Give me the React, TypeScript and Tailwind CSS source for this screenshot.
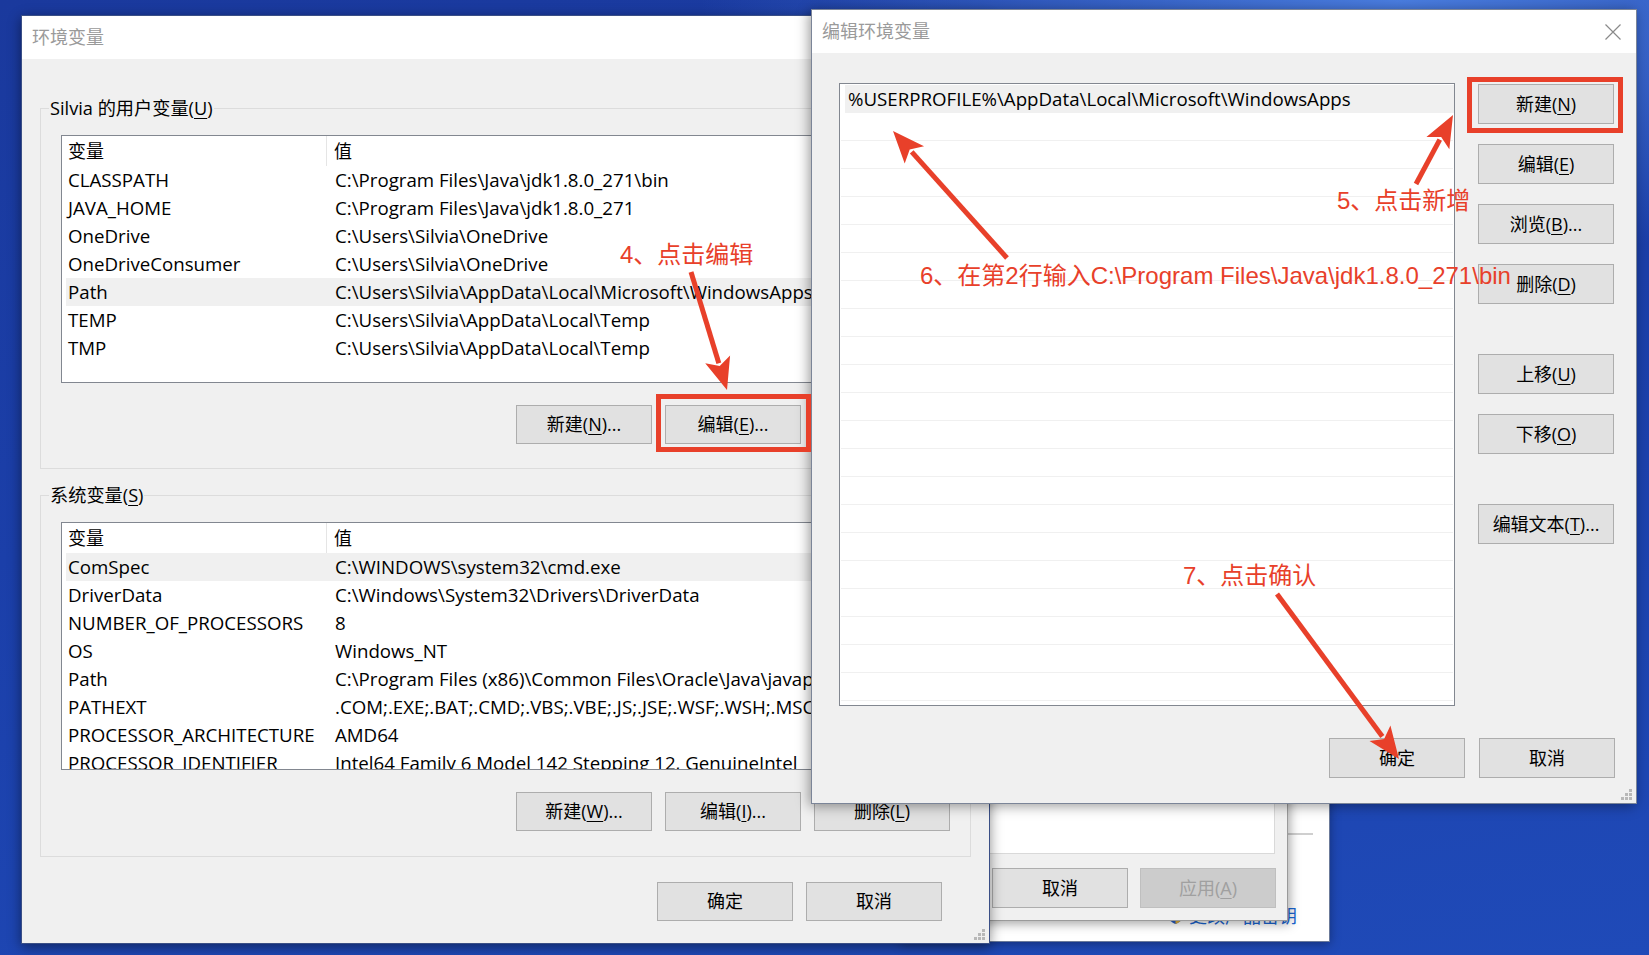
import React from "react";

const UI = "font-['Open_Sans','Noto_Sans_CJK_SC',sans-serif]";
const NOTE = "font-['Liberation_Sans','Noto_Sans_CJK_SC',sans-serif]";

const userVars: [string, string][] = [
  ["CLASSPATH", "C:\\Program Files\\Java\\jdk1.8.0_271\\bin"],
  ["JAVA_HOME", "C:\\Program Files\\Java\\jdk1.8.0_271"],
  ["OneDrive", "C:\\Users\\Silvia\\OneDrive"],
  ["OneDriveConsumer", "C:\\Users\\Silvia\\OneDrive"],
  ["Path", "C:\\Users\\Silvia\\AppData\\Local\\Microsoft\\WindowsApps;"],
  ["TEMP", "C:\\Users\\Silvia\\AppData\\Local\\Temp"],
  ["TMP", "C:\\Users\\Silvia\\AppData\\Local\\Temp"],
];

const sysVars: [string, string][] = [
  ["ComSpec", "C:\\WINDOWS\\system32\\cmd.exe"],
  ["DriverData", "C:\\Windows\\System32\\Drivers\\DriverData"],
  ["NUMBER_OF_PROCESSORS", "8"],
  ["OS", "Windows_NT"],
  ["Path", "C:\\Program Files (x86)\\Common Files\\Oracle\\Java\\javapath;C:\\WINDOWS\\system32"],
  ["PATHEXT", ".COM;.EXE;.BAT;.CMD;.VBS;.VBE;.JS;.JSE;.WSF;.WSH;.MSC"],
  ["PROCESSOR_ARCHITECTURE", "AMD64"],
  ["PROCESSOR_IDENTIFIER", "Intel64 Family 6 Model 142 Stepping 12, GenuineIntel"],
];

const Btn = ({
  children,
  className = "w-[136px] h-[39px]",
  disabled = false,
}: {
  children: React.ReactNode;
  className?: string;
  disabled?: boolean;
}) => (
  <div
    className={`${className} flex shrink-0 items-center justify-center border text-[18px] ${
      disabled
        ? "border-[#bfbfbf] bg-[#cccccc] text-[#a0a0a0]"
        : "border-[#adadad] bg-[#e1e1e1] text-black"
    }`}
  >
    {children}
  </div>
);

const U = ({ children }: { children: React.ReactNode }) => (
  <span className="underline underline-offset-[3px]">{children}</span>
);

const Grip = () => (
  <svg className="absolute right-[3px] bottom-[2px]" width="12" height="12" viewBox="0 0 12 12">
    {[
      [8, 0],
      [4, 4],
      [8, 4],
      [0, 8],
      [4, 8],
      [8, 8],
    ].map(([x, y]) => (
      <rect key={`${x}-${y}`} x={x} y={y} width="3" height="3" fill="#b8b8b8" />
    ))}
  </svg>
);

const VarList = ({ rows, selected }: { rows: [string, string][]; selected: number }) => (
  <div className="h-[248px] overflow-hidden border border-[#828790] bg-white text-[18.7px] text-black">
    <div className="flex h-[30px] items-center">
      <div className="h-full w-[265px] border-r border-[#e5e5e5] pl-[6px] text-[18px] leading-[30px]">变量</div>
      <div className="pl-[7px] text-[18px]">值</div>
    </div>
    <div className="pl-[4px]">
      {rows.map(([name, value], i) => (
        <div
          key={name + i}
          className={`flex h-[28px] items-center whitespace-nowrap ${i === selected ? "bg-[#f0f0f0]" : ""}`}
        >
          <div className="w-[261px] shrink-0 pl-[2px]">{name}</div>
          <div className="pl-[8px]">{value}</div>
        </div>
      ))}
    </div>
  </div>
);

const GroupBox = ({
  label,
  className = "",
  children,
}: {
  label: React.ReactNode;
  className?: string;
  children: React.ReactNode;
}) => (
  <div className={`relative border border-[#dcdcdc] px-[20px] pt-[26px] ${className}`}>
    <span className="absolute -top-[13px] left-[8px] bg-[#f0f0f0] px-[1px] text-[18.2px] leading-[24px] text-black">
      {label}
    </span>
    {children}
  </div>
);

const arrow = (x1: number, y1: number, x2: number, y2: number) => {
  const dx = x2 - x1;
  const dy = y2 - y1;
  const len = Math.hypot(dx, dy);
  const ux = dx / len;
  const uy = dy / len;
  const nx = -uy;
  const ny = ux;
  const L = 32;
  const W = 13;
  const bx = x2 - ux * L;
  const by = y2 - uy * L;
  const nb = x2 - ux * (L - 7);
  const nby = y2 - uy * (L - 7);
  return {
    line: { x1, y1, x2: bx + ux * 4, y2: by + uy * 4 },
    head: `${x2},${y2} ${bx + nx * W},${by + ny * W} ${nb},${nby} ${bx - nx * W},${by - ny * W}`,
  };
};

const arrows = [
  arrow(691, 272, 727, 390),
  arrow(1416, 184, 1453, 115),
  arrow(1007, 258, 893, 131),
  arrow(1277, 594, 1399, 759),
];

const App = () => {
  return (
    <div
      className={`${UI} relative h-[955px] w-[1649px] overflow-hidden bg-[radial-gradient(ellipse_700px_260px_at_1400px_0px,#4a7de0_0%,rgba(60,110,215,0)_100%),linear-gradient(170deg,#1a399d_0%,#1b3fa9_45%,#1f4ab8_100%)]`}
    >
      {/* window behind everything */}
      <div className="absolute left-[900px] top-[560px] flex h-[382px] w-[430px] flex-col border border-[#6b7a99] bg-white shadow-[0_2px_10px_rgba(0,0,0,0.35)]">
        <div className="mt-[272px] mr-[16px] h-[2px] w-[140px] self-end bg-[#cfcfcf]" />
        <div className="mt-[70px] mr-[32px] flex items-center gap-[6px] self-end text-[18px] leading-[22px] text-[#1a66d2]">
          <svg width="15" height="16" viewBox="0 0 15 16">
            <path d="M7.5 0 L15 2.5 V8 C15 12 11 14.5 7.5 16 C4 14.5 0 12 0 8 V2.5 Z" fill="#2a5fc4" />
            <path d="M7.5 0 V8 H0 V2.5 Z" fill="#e8b53a" />
            <path d="M7.5 8 H15 C15 12 11 14.5 7.5 16 Z" fill="#e8b53a" />
          </svg>
          <span>更改产品密钥</span>
        </div>
      </div>

      {/* system properties dialog */}
      <div className="absolute left-[700px] top-[470px] flex h-[451px] w-[588px] flex-col border border-[#9a9a9a] bg-[#f0f0f0] shadow-[2px_3px_10px_rgba(0,0,0,0.35)]">
        <div className="mx-[12px] mt-[40px] flex-1 border border-[#d9d9d9] bg-white" />
        <div className="mt-[14px] mb-[12px] flex justify-end gap-[12px] pr-[11px]">
          <Btn className="w-[136px] h-[40px]">确定</Btn>
          <Btn className="w-[136px] h-[40px]">取消</Btn>
          <Btn className="w-[136px] h-[40px]" disabled>
            应用(<U>A</U>)
          </Btn>
        </div>
      </div>

      {/* 环境变量 */}
      <div className="absolute left-[21px] top-[15px] flex h-[929px] w-[969px] flex-col border border-[#3a4f86] bg-[#f0f0f0] shadow-[0_3px_12px_rgba(0,0,0,0.45)]">
        <div className="flex h-[43px] shrink-0 items-center bg-white pl-[10px] text-[18px] text-[#9a9a9a]">
          环境变量
        </div>
        <div className="flex flex-1 flex-col px-[18px] pt-[49px]">
          <GroupBox label={<>Silvia 的用户变量(<U>U</U>)</>} className="pb-[24px]">
            <VarList rows={userVars} selected={4} />
            <div className="mt-[22px] flex justify-end gap-[13px]">
              <Btn>
                新建(<U>N</U>)...
              </Btn>
              <Btn>
                编辑(<U>E</U>)...
              </Btn>
              <Btn>
                删除(<U>D</U>)
              </Btn>
            </div>
          </GroupBox>
          <GroupBox label={<>系统变量(<U>S</U>)</>} className="mt-[26px] pb-[25px]">
            <VarList rows={sysVars} selected={0} />
            <div className="mt-[22px] flex justify-end gap-[13px]">
              <Btn>
                新建(<U>W</U>)...
              </Btn>
              <Btn>
                编辑(<U>I</U>)...
              </Btn>
              <Btn>
                删除(<U>L</U>)
              </Btn>
            </div>
          </GroupBox>
          <div className="mt-[25px] flex justify-end gap-[13px] pr-[29px]">
            <Btn>确定</Btn>
            <Btn>取消</Btn>
          </div>
        </div>
        <Grip />
      </div>

      {/* 编辑环境变量 */}
      <div className="absolute left-[811px] top-[9px] flex h-[795px] w-[826px] flex-col border border-[#7b8598] bg-[#f0f0f0] shadow-[-2px_2px_12px_rgba(0,0,0,0.4)]">
        <div className="flex h-[43px] shrink-0 items-center justify-between bg-white pl-[10px] pr-[15px] text-[18px] text-[#9a9a9a]">
          <span>编辑环境变量</span>
          <svg width="16" height="16" viewBox="0 0 16 16">
            <path d="M0.5 0.5 L15.5 15.5 M15.5 0.5 L0.5 15.5" stroke="#8a8a8a" strokeWidth="1.2" />
          </svg>
        </div>
        <div className="flex flex-1 flex-col pl-[27px] pr-[21px] pt-[30px]">
          <div className="flex">
            <div className="h-[623px] w-[616px] shrink-0 overflow-hidden border border-[#828790] bg-white pt-[1px] text-[18.7px] text-black">
              <div className="ml-[5px] flex h-[28px] items-center bg-[#f0f0f0] pl-[3px] whitespace-nowrap">
                %USERPROFILE%\AppData\Local\Microsoft\WindowsApps
              </div>
              {Array.from({ length: 21 }).map((_, i) => (
                <div key={i} className="mx-[1px] h-[28px] border-b border-[#f0f0f0]" />
              ))}
            </div>
            <div className="ml-[23px] mt-[1px] flex flex-col">
              <Btn className="w-[136px] h-[40px]">
                新建(<U>N</U>)
              </Btn>
              <div className="mt-[20px]">
                <Btn className="w-[136px] h-[40px]">
                  编辑(<U>E</U>)
                </Btn>
              </div>
              <div className="mt-[20px]">
                <Btn className="w-[136px] h-[40px]">
                  浏览(<U>B</U>)...
                </Btn>
              </div>
              <div className="mt-[20px]">
                <Btn className="w-[136px] h-[40px]">
                  删除(<U>D</U>)
                </Btn>
              </div>
              <div className="mt-[50px]">
                <Btn className="w-[136px] h-[40px]">
                  上移(<U>U</U>)
                </Btn>
              </div>
              <div className="mt-[20px]">
                <Btn className="w-[136px] h-[40px]">
                  下移(<U>O</U>)
                </Btn>
              </div>
              <div className="mt-[50px]">
                <Btn className="w-[136px] h-[40px]">
                  编辑文本(<U>T</U>)...
                </Btn>
              </div>
            </div>
          </div>
          <div className="mt-[32px] flex justify-end gap-[14px]">
            <Btn className="w-[136px] h-[40px]">确定</Btn>
            <Btn className="w-[136px] h-[40px]">取消</Btn>
          </div>
        </div>
        <Grip />
      </div>

      {/* annotations */}
      <div className="pointer-events-none absolute left-[656px] top-[394px] h-[58px] w-[155px] border-[5px] border-[#e8402a]" />
      <div className="pointer-events-none absolute left-[1467px] top-[77px] h-[56px] w-[156px] border-[5px] border-[#e8402a]" />
      <svg className="pointer-events-none absolute left-0 top-0" width="1649" height="955">
        {arrows.map((a, i) => (
          <g key={i}>
            <line {...a.line} stroke="#e8402a" strokeWidth="5" />
            <polygon points={a.head} fill="#e8402a" />
          </g>
        ))}
      </svg>
      <div className={`${NOTE} absolute left-[620px] top-[241px] text-[24px] leading-[28px] text-[#e8402a]`}>
        4、点击编辑
      </div>
      <div className={`${NOTE} absolute left-[1337px] top-[187px] text-[24px] leading-[28px] text-[#e8402a]`}>
        5、点击新增
      </div>
      <div className={`${NOTE} absolute left-[920px] top-[262px] whitespace-nowrap text-[24px] leading-[28px] text-[#e8402a]`}>
        6、在第2行输入C:\Program Files\Java\jdk1.8.0_271\bin
      </div>
      <div className={`${NOTE} absolute left-[1183px] top-[562px] text-[24px] leading-[28px] text-[#e8402a]`}>
        7、点击确认
      </div>
    </div>
  );
};

export default App;
